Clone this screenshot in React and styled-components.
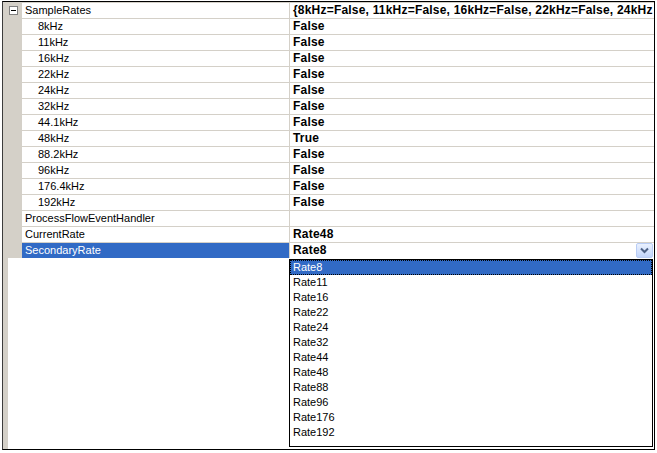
import React from "react";
import styled, { createGlobalStyle } from "styled-components";

const GlobalStyle = createGlobalStyle`
  html, body {
    margin: 0;
    padding: 0;
    background: #fff;
  }
  body {
    font-family: "Liberation Sans", Arial, sans-serif;
    font-size: 11px;
    color: #000;
  }
`;

const LINE = "#d4d0c8";
const SELECT = "#316ac5";

const Frame = styled.div`
  position: relative;
  box-sizing: border-box;
  width: 653px;
  height: 449px;
  margin: 1px 0 0 2px;
  border: 1px solid #000;
  border-left-color: #3c3c3c;
  background: linear-gradient(90deg, ${LINE} 0 5px, #fff 5px);
  overflow: hidden;
`;

const Rows = styled.div`
  display: flex;
  flex-direction: column;
`;

const Row = styled.div`
  display: grid;
  grid-template-columns: 19px 268px 1fr;
  height: 16px;
`;

const Margin = styled.div`
  background: ${LINE};
  display: flex;
  align-items: center;
  justify-content: center;
  padding-left: 2px;
`;

const Name = styled.div`
  box-sizing: border-box;
  border-top: 1px solid ${LINE};
  border-right: 1px solid ${LINE};
  padding-left: ${(p) => (p.$child ? 16 : 3)}px;
  line-height: 15px;
  white-space: nowrap;
  overflow: hidden;
  background: ${(p) => (p.$selected ? SELECT : "transparent")};
  color: ${(p) => (p.$selected ? "#fff" : "#000")};
`;

const Value = styled.div`
  box-sizing: border-box;
  border-top: 1px solid ${LINE};
  padding-left: 3px;
  line-height: 15px;
  font-size: 12px;
  font-weight: bold;
  letter-spacing: 0.2px;
  white-space: nowrap;
  overflow: hidden;
  display: flex;
  align-items: center;
  justify-content: space-between;
`;

const Toggle = styled.span`
  box-sizing: border-box;
  width: 9px;
  height: 9px;
  border: 1px solid #808080;
  background: #fff;
  position: relative;
  &::after {
    content: "";
    position: absolute;
    left: 1px;
    top: 3px;
    width: 5px;
    height: 1px;
    background: #000;
  }
`;

const DropButton = styled.span`
  box-sizing: border-box;
  flex: none;
  width: 17px;
  height: 15px;
  margin-right: 1px;
  border: 1px solid #b9cdf5;
  border-radius: 2px;
  background: linear-gradient(#eaf1fe, #c2d5fb);
  display: flex;
  align-items: center;
  justify-content: center;
`;

const List = styled.div`
  position: absolute;
  left: 286px;
  top: 257px;
  box-sizing: border-box;
  width: 364px;
  height: 188px;
  border: 1px solid #000;
  background: #fff;
  display: flex;
  flex-direction: column;
`;

const Item = styled.div`
  box-sizing: border-box;
  height: 15px;
  line-height: 13px;
  padding-left: 2px;
  border: 1px ${(p) => (p.$selected ? "dotted #000" : "solid transparent")};
  background: ${(p) => (p.$selected ? SELECT : "transparent")};
  color: ${(p) => (p.$selected ? "#fff" : "#000")};
`;

const rates = ["8kHz", "11kHz", "16kHz", "22kHz", "24kHz", "32kHz", "44.1kHz", "48kHz", "88.2kHz", "96kHz", "176.4kHz", "192kHz"];
const options = ["Rate8", "Rate11", "Rate16", "Rate22", "Rate24", "Rate32", "Rate44", "Rate48", "Rate88", "Rate96", "Rate176", "Rate192"];

function Chevron() {
  return (
    <svg width="9" height="7" viewBox="0 0 9 7">
      <polyline points="1,1.5 4.5,5 8,1.5" fill="none" stroke="#4d6185" strokeWidth="2" />
    </svg>
  );
}

export default function App() {
  return (
    <>
      <GlobalStyle />
      <Frame>
        <Rows>
          <Row>
            <Margin>
              <Toggle />
            </Margin>
            <Name>SampleRates</Name>
            <Value>{"{8kHz=False, 11kHz=False, 16kHz=False, 22kHz=False, 24kHz"}</Value>
          </Row>
          {rates.map((r) => (
            <Row key={r}>
              <Margin />
              <Name $child>{r}</Name>
              <Value>{r === "48kHz" ? "True" : "False"}</Value>
            </Row>
          ))}
          <Row>
            <Margin />
            <Name>ProcessFlowEventHandler</Name>
            <Value />
          </Row>
          <Row>
            <Margin />
            <Name>CurrentRate</Name>
            <Value>Rate48</Value>
          </Row>
          <Row>
            <Margin />
            <Name $selected>SecondaryRate</Name>
            <Value>
              Rate8
              <DropButton>
                <Chevron />
              </DropButton>
            </Value>
          </Row>
        </Rows>
        <List>
          {options.map((o, i) => (
            <Item key={o} $selected={i === 0}>
              {o}
            </Item>
          ))}
        </List>
      </Frame>
    </>
  );
}
